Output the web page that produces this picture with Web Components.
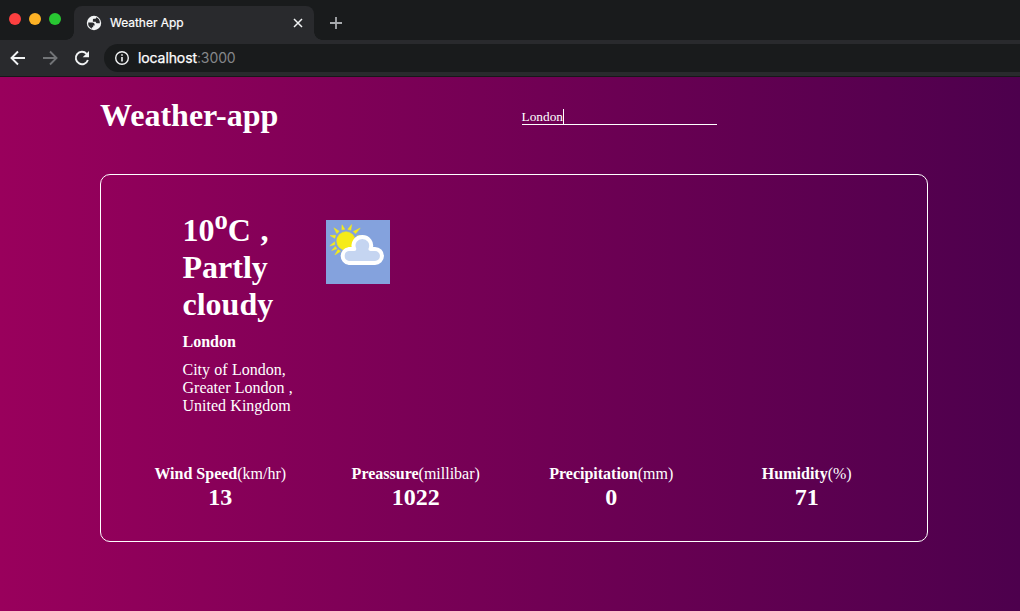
<!DOCTYPE html>
<html lang="en">
<head>
<meta charset="utf-8">
<title>Weather App</title>
<style>
html,body{margin:0;height:100%;overflow:hidden}
body{display:flex;flex-direction:column;font-family:"Liberation Serif",serif;color:#fff}
</style>
</head>
<body>
<browser-chrome address="localhost" port=":3000">Weather App</browser-chrome>
<weather-page></weather-page>
<script>
const define = (name, html, setup) => customElements.define(name, class extends HTMLElement {
  connectedCallback() {
    if (this.shadowRoot) return;
    const t = document.createElement('template');
    t.innerHTML = html;
    this.attachShadow({mode: 'open'}).append(t.content.cloneNode(true));
    if (setup) setup(this, this.shadowRoot);
  }
});

define('browser-chrome', `
<style>
:host{display:flex;flex-direction:column;flex:none;height:77px;box-sizing:border-box;border-bottom:1px solid #171819;background:#292a2d;font-family:Inter,sans-serif;color:#fff}
svg{display:block;flex:none}
.strip{display:flex;height:40px;background:#191b1c}
.lights{display:flex;gap:8px;padding:13px 0 0 9px;width:74px;box-sizing:border-box}
i{width:12px;height:12px;border-radius:50%}
.tab{position:relative;display:flex;align-items:center;box-sizing:border-box;width:240px;height:34px;margin-top:6px;padding:0 10px 0 12px;border-radius:8px 8px 0 0;background:#292a2d;font-size:12px}
.tab::before,.tab::after{content:"";position:absolute;bottom:0;width:8px;height:8px}
.tab::before{left:-8px;background:radial-gradient(circle at 0 0,transparent 7.5px,#292a2d 8px)}
.tab::after{right:-8px;background:radial-gradient(circle at 100% 0,transparent 7.5px,#292a2d 8px)}
.name{flex:1;margin-left:8px;padding-bottom:2px;letter-spacing:-.03px;-webkit-text-stroke:.2px #fff}
.plus{margin:15px 0 0 14px}
.bar{display:flex;align-items:center;height:36px;padding-left:8px;gap:12px}
.url{display:flex;align-items:center;flex:1;height:28px;padding-left:8px;border-radius:14px 0 0 14px;background:#191b1c;font-size:14px;letter-spacing:-.1px}
.url span{padding-bottom:2px}
.url .a{margin-left:6px;-webkit-text-stroke:.25px #fff}
.url .p{color:#85878a}
</style>
<div class="strip">
 <div class="lights"><i style="background:#fc4040"></i><i style="background:#fdb225"></i><i style="background:#28c732"></i></div>
 <div class="tab">
  <svg width="16" height="16" viewBox="0 0 16 16"><circle cx="8" cy="8" r="7.200" fill="#f1f3f4"/><path d="M2.200 7.600H6.200C7.700 7.600 8.600 8.500 8.600 9.600V10.400H7.200V12.200H5.900V13.700A6 6 0 0 1 2.200 7.600ZM10.200 2.300A6 6 0 0 1 13.800 8.300H11.400C10.200 8.300 9.700 7.700 9.700 6.800H6.900V4.800C6.900 4.200 7.400 3.800 8.200 3.800H9.200C9.800 3.800 10.200 3.200 10.200 2.300Z" fill="#292a2d"/></svg>
  <span class="name"><slot></slot></span>
  <svg width="12" height="12" viewBox="0 0 12 12"><path d="m2 2 8 8M10 2l-8 8" stroke="#f1f3f4" stroke-width="1.500"/></svg>
 </div>
 <svg class="plus" width="16" height="16" viewBox="0 0 16 16"><path d="M2 8h12M8 2v12" stroke="#a8abae" stroke-width="1.800"/></svg>
</div>
<div class="bar">
 <svg width="20" height="20" viewBox="0 0 20 20"><path d="M17 10H4M10 3.500 3.500 10l6.500 6.500" fill="none" stroke="#f1f3f4" stroke-width="1.900"/></svg>
 <svg width="20" height="20" viewBox="0 0 20 20"><path d="M3 10h13M10 3.500l6.500 6.500-6.500 6.500" fill="none" stroke="#727477" stroke-width="1.900"/></svg>
 <svg width="20" height="20" viewBox="0 0 20 20"><path d="M15.900 12A6.200 6.200 0 1 1 14.600 5.800" fill="none" stroke="#f1f3f4" stroke-width="1.900"/><path d="M17 3v6.300h-6.300z" fill="#f1f3f4"/></svg>
 <div class="url">
  <svg width="20" height="20" viewBox="0 0 20 20"><circle cx="10" cy="10" r="6.300" fill="none" stroke="#f1f3f4" stroke-width="1.400"/><path d="M10 9v4.500M10 6.200v1.600" stroke="#f1f3f4" stroke-width="1.600"/></svg>
  <span class="a"></span><span class="p"></span>
 </div>
</div>`, (host, root) => {
  root.querySelector('.a').textContent = host.getAttribute('address');
  root.querySelector('.p').textContent = host.getAttribute('port');
});

define('search-field', `
<style>
:host{display:flex;align-items:flex-end;box-sizing:border-box;width:195px;height:17px;border-bottom:1px solid #fff;font-size:13.333px;line-height:15px}
span:first-of-type{margin-left:-.5px}
.caret{width:1px;height:15px;background:#fff}
</style><span><slot></slot></span><span class="caret"></span>`);

define('partly-cloudy-icon', `
<style>:host{display:block;width:64px;height:64px}svg{display:block}</style>
<svg width="64" height="64" viewBox="0 0 64 64">
<rect width="64" height="64" fill="#84a2dd"/>
<g fill="#f6eb18" stroke="#f6eb18" stroke-width=".5"><circle cx="20" cy="21" r="9.300"/>
<path d="M15.800 9.800 18.800 9.300 16 4.800ZM21.800 9.300l3 .9.900-5.600ZM27.300 11.600l2.400 2 4.500-5.500ZM30.900 15.800l1.200 2.700 5.200-2.700ZM10.800 13.500l2.400-2.200-5.300-3.500ZM8.700 18.300l1-3-5.600.2ZM8.800 21.800v3l-5 1ZM9.300 26.500l1.700 2.300-5.300 1.700ZM12 29.600l2.600 1.600-5.700 3.700Z"/></g>
<path d="M22.500 42.900A7 7 0 0 1 22.500 29.100H28.300C25.500 22.500 30.500 17 36.300 17C42.300 17 47 22.600 44.500 29H49A6.950 6.950 0 0 1 49 42.900Z" fill="#c5d5f1" stroke="#fff" stroke-width="4" stroke-linejoin="round"/>
</svg>`);

define('weather-stat', `
<style>
:host{display:block;text-align:center;font-size:16px;line-height:18px}
.v{margin-top:1px;font-size:24px;line-height:27px;font-weight:bold}
</style><div><b class="l"></b><span class="u"></span></div><div class="v"><slot></slot></div>`, (host, root) => {
  root.querySelector('.l').textContent = host.getAttribute('label');
  root.querySelector('.u').textContent = '(' + host.getAttribute('unit') + ')';
});

define('weather-card', `
<style>
:host{display:flex;flex-direction:column;box-sizing:border-box;width:828px;height:368px;border:1px solid #fff;border-radius:10px;padding:36px 22.500px 0 21.500px}
.now{display:flex;height:254px;padding-left:60px}
.text{width:113px;margin-right:30px;padding-top:1px}
h1{margin:0;font-size:32px;line-height:37px;word-spacing:1.5px}
sup{font-size:26.67px;line-height:0;vertical-align:super}
h4{margin:10px 0 10px;font-size:16px;line-height:18px}
p{margin:0;font-size:16px;line-height:18px;word-spacing:.3px}
partly-cloudy-icon{margin-top:9px}
.stats{display:grid;grid-template-columns:repeat(4,1fr)}
</style>
<div class="now">
 <div class="text"><h1>10<sup>o</sup>C , Partly cloudy</h1><h4>London</h4><p>City of London,<br>Greater London ,<br>United Kingdom</p></div>
 <partly-cloudy-icon></partly-cloudy-icon>
</div>
<div class="stats">
 <weather-stat label="Wind Speed" unit="km/hr">13</weather-stat>
 <weather-stat label="Preassure" unit="millibar">1022</weather-stat>
 <weather-stat label="Precipitation" unit="mm">0</weather-stat>
 <weather-stat label="Humidity" unit="%">71</weather-stat>
</div>`);

define('weather-page', `
<style>
:host{display:block;flex:1;box-sizing:border-box;padding:20px 92px 0 100px;background:linear-gradient(to right,#99005c,#4d004d)}
header{display:flex;align-items:flex-start;height:77px}
h1{margin:0;width:422px;font-size:32px;line-height:37px}
search-field{margin-top:11px}
</style>
<header><h1>Weather-app</h1><search-field>London</search-field></header>
<weather-card></weather-card>`);
</script>
</body>
</html>
